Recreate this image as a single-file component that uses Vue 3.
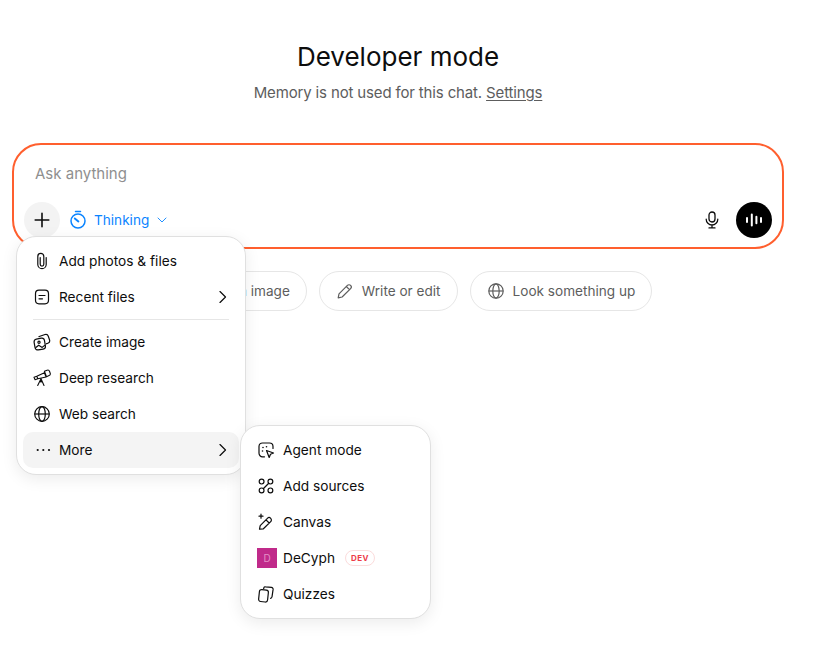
<script setup>
const chips = [
  { label: 'Create an image', icon: 'image' },
  { label: 'Write or edit', icon: 'pencil' },
  { label: 'Look something up', icon: 'globe' }
]
</script>

<template>
  <div class="page">
    <h1 class="title">Developer mode</h1>
    <p class="sub">Memory is not used for this chat. <a class="link">Settings</a></p>

    <div class="composer-wrap">
      <div class="composer">
        <div class="placeholder">Ask anything</div>
        <div class="toolbar">
          <button class="plus">
            <svg width="18" height="18" viewBox="0 0 18 18" fill="none" stroke="#0d0d0d" stroke-width="1.6" stroke-linecap="round"><path d="M9 2.2v13.6M2.2 9h13.6"/></svg>
          </button>
          <div class="thinking">
            <svg width="18" height="20" viewBox="0 0 18 20" fill="none" stroke="#0a84ff" stroke-width="1.5" stroke-linecap="round"><path d="M6.500 1.600h5"/><circle cx="9" cy="11" r="7"/><path d="M5.800 8.400l3.600 3" stroke-width="1.9"/></svg>
            <span>Thinking</span>
            <svg width="10" height="6" viewBox="0 0 10 6" fill="none" stroke="#0a84ff" stroke-width="0.9" stroke-linecap="round" stroke-linejoin="round"><path d="M1 1l4 4 4-4"/></svg>
          </div>
          <div class="spacer"></div>
          <svg class="mic" width="14" height="18" viewBox="0 0 14 18" fill="none" stroke="#0d0d0d" stroke-width="1.3" stroke-linecap="round"><rect x="4" y="1" width="6" height="10" rx="3"/><path d="M1.200 8.200a5.800 5.800 0 0 0 11.600 0M7 14v2.800M4 16.900h6"/></svg>
          <button class="voice">
            <svg width="18" height="14" viewBox="0 0 18 14" fill="none" stroke="#fff" stroke-width="2" stroke-linecap="round"><path d="M2 5v4M6.800 1.500v11M11.400 3.800v6.400M16 5v4"/></svg>
          </button>
        </div>
      </div>

      <div class="chips">
        <div v-for="c in chips" :key="c.label" class="chip">
          <svg v-if="c.icon === 'image'" width="18" height="18" viewBox="0 0 18 18" fill="none" stroke="#5d5d5d" stroke-width="1.2"><rect x="2" y="3" width="14" height="12" rx="3"/></svg>
          <svg v-else-if="c.icon === 'pencil'" width="18" height="18" viewBox="0 0 18 18" fill="none" stroke="#5d5d5d" stroke-width="1.2" stroke-linejoin="round"><path d="M2.200 15.800l.8-3.900 8.400-8.500c.9-.9 2.300-.9 3.200 0s.9 2.300 0 3.200l-8.500 8.400zM10.300 4.500l3.200 3.200"/></svg>
          <svg v-else width="18" height="18" viewBox="0 0 18 18" fill="none" stroke="#5d5d5d" stroke-width="1.200"><circle cx="9" cy="9" r="7.200"/><ellipse cx="9" cy="9" rx="3.200" ry="7.200"/><path d="M1.800 9h14.400"/></svg>
          <span>{{ c.label }}</span>
        </div>
      </div>

      <div class="menu main-menu">
        <div class="item">
          <svg class="ic" width="18" height="18" viewBox="0 0 18 18" fill="none" stroke="#0d0d0d" stroke-width="1.200" stroke-linecap="round"><path d="M7.200 5.500v6.800a1.800 1.800 0 0 0 3.600 0V4.400a3 3 0 0 0-6 0v8a4.200 4.200 0 0 0 8.400 0V5.500"/></svg>
          <span>Add photos &amp; files</span>
        </div>
        <div class="item">
          <svg class="ic" width="18" height="18" viewBox="0 0 18 18" fill="none" stroke="#0d0d0d" stroke-width="1.200" stroke-linecap="round"><rect x="2.500" y="2.200" width="13" height="13.600" rx="3.500"/><path d="M6 7.500h6M6 10.800h3.500"/></svg>
          <span>Recent files</span>
          <svg class="arrow" width="8" height="12" viewBox="0 0 8 12" fill="none" stroke="#0d0d0d" stroke-width="1.200" stroke-linecap="round" stroke-linejoin="round"><path d="M1 .5l5.500 5.500-5.500 5.500"/></svg>
        </div>
        <div class="divider"></div>
        <div class="item">
          <svg class="ic" width="18" height="18" viewBox="0 0 18 18" fill="none" stroke="#0d0d0d" stroke-width="1.200" stroke-linejoin="round"><rect x="1.500" y="5.500" width="10.500" height="11" rx="2.800" transform="rotate(-10 7 11)"/><path d="M5.500 3.800l6.500-2.300c1.400-.4 2.800.3 3.300 1.700l1.200 3.600c.5 1.500-.2 2.900-1.600 3.400l-1.900.7"/><circle cx="6" cy="9.200" r="1.100"/><path d="M2.500 14.800l3.200-2.600 3.500 2.200 2.700-2.300"/></svg>
          <span>Create image</span>
        </div>
        <div class="item">
          <svg class="ic" width="18" height="18" viewBox="0 0 18 18" fill="none" stroke="#0d0d0d" stroke-width="1.100" stroke-linecap="round" stroke-linejoin="round"><path d="M1 8.200l1.100 2.600 2.700-1-1-2.600zM3.800 7.200l7.600-3.500 1.700 4.300-8.300 1.800M11.400 2.300l2.700-1.100c1-.4 2 .1 2.400 1.100l.7 1.900c.3 1-.1 2-1.100 2.400l-2.600 1.100zM8 9.700l-3.300 6.800M8 9.700l3 6.800M8 9.700v3.500"/></svg>
          <span>Deep research</span>
        </div>
        <div class="item">
          <svg class="ic" width="18" height="18" viewBox="0 0 18 18" fill="none" stroke="#0d0d0d" stroke-width="1.200"><circle cx="9" cy="9" r="7.300"/><ellipse cx="9" cy="9" rx="3.300" ry="7.300"/><path d="M1.700 9h14.600"/></svg>
          <span>Web search</span>
        </div>
        <div class="item active">
          <svg class="ic" width="18" height="18" viewBox="0 0 18 18" fill="#0d0d0d"><circle cx="4.700" cy="9" r="1.100"/><circle cx="10.300" cy="9" r="1.100"/><circle cx="16" cy="9" r="1.100"/></svg>
          <span>More</span>
          <svg class="arrow" width="8" height="12" viewBox="0 0 8 12" fill="none" stroke="#0d0d0d" stroke-width="1.200" stroke-linecap="round" stroke-linejoin="round"><path d="M1 .5l5.500 5.500-5.500 5.500"/></svg>
        </div>
      </div>

      <div class="menu sub-menu">
        <div class="item">
          <svg class="ic" width="18" height="18" viewBox="0 0 18 18" fill="none" stroke="#0d0d0d" stroke-width="1.200" stroke-linecap="round" stroke-linejoin="round"><path d="M7.500 15.800H5.500a3.500 3.500 0 0 1-3.500-3.500V5.500A3.500 3.500 0 0 1 5.500 2h7A3.500 3.500 0 0 1 16 5.500v2"/><path d="M9.500 9.500l7 2.500-3 1.300-1.300 3.200z"/><circle cx="6" cy="6.500" r=".8" fill="#0d0d0d" stroke="none"/><circle cx="9.500" cy="5.800" r=".8" fill="#0d0d0d" stroke="none"/><circle cx="5.500" cy="10" r=".8" fill="#0d0d0d" stroke="none"/></svg>
          <span>Agent mode</span>
        </div>
        <div class="item">
          <svg class="ic" width="18" height="18" viewBox="0 0 18 18" fill="none" stroke="#0d0d0d" stroke-width="1.200" stroke-linecap="round"><circle cx="4.600" cy="4.600" r="2.400"/><circle cx="13.400" cy="4.600" r="2.400"/><circle cx="4.600" cy="13.400" r="2.400"/><circle cx="13.400" cy="13.400" r="2.400"/><path d="M6.500 11.500l5-5"/></svg>
          <span>Add sources</span>
        </div>
        <div class="item">
          <svg class="ic" width="18" height="18" viewBox="0 0 18 18" fill="none" stroke="#0d0d0d" stroke-width="1.200" stroke-linecap="round" stroke-linejoin="round"><path d="M2.500 16.200l.7-3.600 7.200-7.300c.9-.9 2.400-.9 3.300 0s.9 2.400 0 3.300l-7.300 7.200zM9 6.800l3.200 3.200M4 1.200v4M2 3.200h4"/></svg>
          <span>Canvas</span>
        </div>
        <div class="item">
          <div class="avatar">D</div>
          <span>DeCyph</span>
          <span class="dev">DEV</span>
        </div>
        <div class="item">
          <svg class="ic" width="18" height="18" viewBox="0 0 18 18" fill="none" stroke="#0d0d0d" stroke-width="1.200" stroke-linejoin="round"><rect x="2" y="4.800" width="9" height="12" rx="2.200" transform="rotate(6 6.500 10.800)"/><path d="M6.500 4l.4-1.300c.2-.7 1-1 1.600-.9l6 .6c1 .1 1.700 1 1.600 2L15 11.800c-.1 1-.9 1.700-1.900 1.600"/></svg>
          <span>Quizzes</span>
        </div>
      </div>
    </div>
  </div>
</template>

<style scoped>
.page {
  display: flex;
  flex-direction: column;
  align-items: center;
  box-sizing: border-box;
  min-height: 659px;
  padding: 38px 27px 0 0;
  color: #0d0d0d;
  font-family: Inter, "Liberation Sans", sans-serif;
}
.title {
  margin: 0;
  font-size: 26px;
  line-height: 38px;
  font-weight: 400;
}
.sub {
  margin: 5px 0 0;
  font-size: 15px;
  line-height: 24px;
  color: #5d5d5d;
  letter-spacing: -0.15px;
}
.link {
  text-decoration: underline;
  text-underline-offset: 2px;
}
.composer-wrap {
  position: relative;
  width: 772px;
  margin-top: 38px;
}
.composer {
  box-sizing: border-box;
  height: 106px;
  border: 2px solid #ff5f2e;
  border-radius: 29px;
  padding: 17px 10px 0 10px;
}
.placeholder {
  padding-left: 11px;
  font-size: 15px;
  line-height: 24px;
  color: #8f8f8f;
}
.toolbar {
  display: flex;
  align-items: center;
  margin-top: 16px;
  height: 36px;
}
.plus,
.voice {
  display: flex;
  align-items: center;
  justify-content: center;
  width: 36px;
  height: 36px;
  padding: 0;
  border: 0;
  border-radius: 50%;
}
.plus {
  background: #f3f3f3;
}
.voice {
  background: #000;
}
.thinking {
  display: flex;
  align-items: center;
  margin-left: 9px;
  color: #0a84ff;
  font-size: 13.6px;
}
.thinking span {
  margin: 0 8px 0 7px;
}
.spacer {
  flex: 1;
}
.mic {
  margin-right: 17px;
}
.chips {
  display: flex;
  justify-content: center;
  gap: 12px;
  margin-top: 22px;
  margin-right: 2px;
}
.chip {
  display: flex;
  align-items: center;
  gap: 8px;
  height: 40px;
  box-sizing: border-box;
  padding: 0 16px;
  border: 1px solid #e6e6e6;
  border-radius: 20px;
  font-size: 13.6px;
  color: #5d5d5d;
}
.menu {
  position: absolute;
  box-sizing: border-box;
  padding: 6px;
  background: #fff;
  border: 1px solid #e0e0e0;
  border-radius: 20px;
  box-shadow: 0 4px 16px rgba(0, 0, 0, 0.08);
  font-size: 13.7px;
  color: #0d0d0d;
}
.main-menu {
  left: 4px;
  top: 93px;
  width: 230px;
  height: 239px;
}
.sub-menu {
  left: 228px;
  top: 282px;
  width: 191px;
  height: 194px;
}
.item {
  display: flex;
  align-items: center;
  height: 36px;
  padding: 0 10px;
  border-radius: 10px;
}
.item.active {
  background: #f4f4f4;
}
.ic,
.avatar {
  flex: none;
  margin-right: 8px;
}
.arrow {
  margin-left: auto;
  margin-right: 2px;
}
.divider {
  height: 1px;
  margin: 4px 10px 4px;
  background: #e6e6e6;
}
.avatar {
  display: flex;
  align-items: center;
  justify-content: center;
  width: 20px;
  height: 20px;
  margin-right: 6px;
  background: #c02a8a;
  color: #e58fc6;
  font-size: 10px;
}
.dev {
  margin-left: 10px;
  padding: 0 5px;
  line-height: 14px;
  border: 1px solid #fbdcdc;
  border-radius: 8px;
  color: #ee3b47;
  font-size: 8px;
  font-weight: 700;
  letter-spacing: 0.4px;
}
</style>

<style>
body {
  background: #fff;
}
</style>
